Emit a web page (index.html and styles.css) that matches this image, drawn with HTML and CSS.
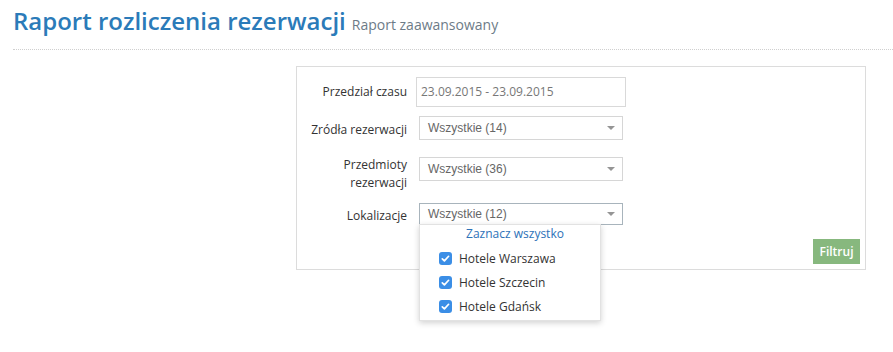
FILE: index.html
```html
<!DOCTYPE html>
<html lang="pl">
<head>
<meta charset="utf-8">
<title>Raport rozliczenia rezerwacji</title>
<link rel="stylesheet" href="styles.css">
</head>
<body>
<div class="page-header">
  <h1 class="title">Raport rozliczenia rezerwacji</h1><small class="subtitle">Raport zaawansowany</small>
</div>
<div class="panel">
  <div class="row row-1">
    <label class="label">Przedział czasu</label>
    <div class="input">23.09.2015 - 23.09.2015</div>
  </div>
  <div class="row row-2">
    <label class="label">Zródła rezerwacji</label>
    <div class="select"><span>Wszystkie (14)</span><i class="caret"></i></div>
  </div>
  <div class="row row-3">
    <label class="label">Przedmioty rezerwacji</label>
    <div class="select"><span>Wszystkie (36)</span><i class="caret"></i></div>
  </div>
  <div class="row row-4">
    <label class="label">Lokalizacje</label>
    <div class="select-wrap">
      <div class="select select-focus"><span>Wszystkie (12)</span><i class="caret"></i></div>
      <div class="dropdown">
        <div class="select-all">Zaznacz wszystko</div>
        <div class="item"><span class="check"><svg viewBox="0 0 13 13" width="13" height="13"><path d="M3.3 6.8 L5.4 8.9 L9.6 4.3" fill="none" stroke="#fff" stroke-width="1.7" stroke-linecap="round" stroke-linejoin="round"/></svg></span>Hotele Warszawa</div>
        <div class="item"><span class="check"><svg viewBox="0 0 13 13" width="13" height="13"><path d="M3.3 6.8 L5.4 8.9 L9.6 4.3" fill="none" stroke="#fff" stroke-width="1.7" stroke-linecap="round" stroke-linejoin="round"/></svg></span>Hotele Szczecin</div>
        <div class="item"><span class="check"><svg viewBox="0 0 13 13" width="13" height="13"><path d="M3.3 6.8 L5.4 8.9 L9.6 4.3" fill="none" stroke="#fff" stroke-width="1.7" stroke-linecap="round" stroke-linejoin="round"/></svg></span>Hotele Gdańsk</div>
      </div>
    </div>
  </div>
  <div class="footer">
    <button class="btn">Filtruj</button>
  </div>
</div>
</body>
</html>
```
FILE: styles.css
```css
* { box-sizing: border-box; }
html, body { margin: 0; padding: 0; background: #fff; }
body {
  min-height: 352px;
  font-family: "Open Sans", "DejaVu Sans", sans-serif;
  font-size: 12px;
  color: #333;
}
.page-header {
  margin-left: 13px;
  height: 50px;
  padding-top: 6px;
  border-bottom: 1px dotted #cfcfcf;
  line-height: 30px;
  white-space: nowrap;
}
.title {
  display: inline;
  margin: 0;
  font-size: 24px;
  font-weight: 600;
  color: #2b7bb9;
  line-height: 30px;
}
.subtitle {
  margin-left: 6px;
  font-size: 14px;
  line-height: 14px;
  color: #6d7b87;
}
.panel {
  margin-top: 16px;
  margin-left: 296px;
  width: 570px;
  border: 1px solid #dcdcdc;
  padding: 10px 5px 5px 0;
}
.row {
  display: flex;
  align-items: flex-start;
}
.label {
  width: 110px;
  text-align: right;
  line-height: 18px;
  flex: none;
}
.row-1 { margin-bottom: 9px; }
.row-1 .label { padding-top: 6px; }
.row-2 { margin-bottom: 16px; }
.row-2 .label { padding-top: 5px; }
.row-3 { margin-bottom: 11px; }
.row-3 .label { padding-left: 40px; }
.row-3 .select { margin-top: 1px; }
.row-4 .label { padding-top: 4px; }
.input {
  margin-left: 9px;
  width: 210px;
  height: 30px;
  border: 1px solid #d9d9d9;
  padding-left: 4px;
  line-height: 28px;
  font-size: 12px;
  color: #777;
}
.select-wrap {
  position: relative;
  margin-left: 12px;
  height: 22px;
}
.select {
  margin-left: 12px;
  width: 204px;
  height: 24px;
  border: 1px solid #d6d6d6;
  display: flex;
  align-items: center;
  justify-content: space-between;
  padding: 0 7px 0 8px;
  font-family: "Liberation Sans", Arial, sans-serif;
  font-size: 12px;
  color: #666;
}
.select-wrap .select { margin-left: 0; height: 22px; }
.select-focus { border-color: #a8b4bc; }
.caret {
  width: 0; height: 0;
  border-left: 4px solid transparent;
  border-right: 4px solid transparent;
  border-top: 4px solid #959595;
}
.dropdown {
  position: absolute;
  top: 21px;
  left: 0;
  width: 182px;
  height: 97px;
  background: #fff;
  border: 1px solid #e2e2e2;
  box-shadow: 0 2px 6px rgba(0,0,0,0.18);
  padding: 0;
  z-index: 2;
}
.select-all {
  text-align: center;
  line-height: 18px;
  color: #2d72b8;
  margin-bottom: 3px;
  padding-left: 10px;
}
.item {
  display: flex;
  align-items: center;
  height: 24px;
  padding-left: 19px;
  color: #333;
}
.check {
  flex: none;
  width: 13px;
  height: 13px;
  border-radius: 3px;
  background: #3b8ee6;
  margin-right: 7px;
  display: flex;
}
.footer {
  display: flex;
  justify-content: flex-end;
  margin-top: 14px;
}
.btn {
  height: 25px;
  width: 47px;
  border: none;
  background: #87b87e;
  color: #fff;
  font-family: "Open Sans", sans-serif;
  font-size: 12px;
  font-weight: 600;
  padding: 0;
}
```
